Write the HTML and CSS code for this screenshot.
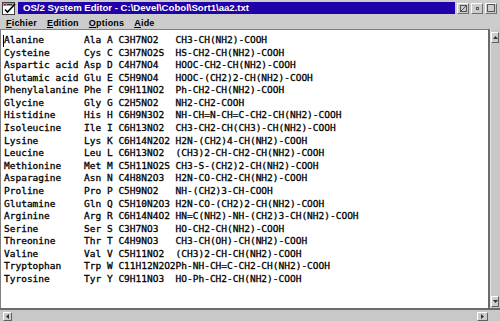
FILE: index.html
```html
<!DOCTYPE html>
<html>
<head>
<meta charset="utf-8">
<link rel="stylesheet" href="styles.css">
</head>
<body>
<div class="window">
  <div class="titlebar">
    <div class="sysicon">
      <svg width="16" height="15" viewBox="0 0 16 15">
        <rect x="1.5" y="1.5" width="12" height="12" fill="#fff" stroke="#404040"/>
        <rect x="2" y="2" width="11" height="3" fill="#9a9a9a"/>
        <rect x="3" y="3" width="2" height="1" fill="#a00"/>
        <rect x="6" y="3" width="5" height="1" fill="#333"/>
        <path d="M4 8.5 L6.5 11 L14 3" stroke="#000" stroke-width="1.6" fill="none"/>
      </svg>
    </div>
    <div class="title">OS/2 System Editor - C:\Devel\Cobol\Sort1\aa2.txt</div>
    <div class="tbtns">
      <span class="tbtn"><svg width="7" height="7" viewBox="0 0 7 7"><rect x="0.5" y="0.5" width="6" height="6" fill="none" stroke="#555"/><path d="M1 6 L6 1" stroke="#555"/></svg></span>
      <span class="tbtn"><span class="minbox"></span></span>
      <span class="tbtn"><span class="maxbox"></span></span>
    </div>
  </div>
  <div class="menubar">
    <span class="menu"><u>F</u>ichier</span>
    <span class="menu"><u>E</u>dition</span>
    <span class="menu"><u>O</u>ptions</span>
    <span class="menu"><u>A</u>ide</span>
  </div>
  <div class="client">
    <div class="editor">
      <span class="caret"></span>
      <div class="r"><span>Alanine</span><span>Ala</span><span>A</span><span>C3H7NO2</span><span>CH3-CH(NH2)-COOH</span></div>
      <div class="r"><span>Cysteine</span><span>Cys</span><span>C</span><span>C3H7NO2S</span><span>HS-CH2-CH(NH2)-COOH</span></div>
      <div class="r"><span>Aspartic acid</span><span>Asp</span><span>D</span><span>C4H7NO4</span><span>HOOC-CH2-CH(NH2)-COOH</span></div>
      <div class="r"><span>Glutamic acid</span><span>Glu</span><span>E</span><span>C5H9NO4</span><span>HOOC-(CH2)2-CH(NH2)-COOH</span></div>
      <div class="r"><span>Phenylalanine</span><span>Phe</span><span>F</span><span>C9H11NO2</span><span>Ph-CH2-CH(NH2)-COOH</span></div>
      <div class="r"><span>Glycine</span><span>Gly</span><span>G</span><span>C2H5NO2</span><span>NH2-CH2-COOH</span></div>
      <div class="r"><span>Histidine</span><span>His</span><span>H</span><span>C6H9N3O2</span><span>NH-CH=N-CH=C-CH2-CH(NH2)-COOH</span></div>
      <div class="r"><span>Isoleucine</span><span>Ile</span><span>I</span><span>C6H13NO2</span><span>CH3-CH2-CH(CH3)-CH(NH2)-COOH</span></div>
      <div class="r"><span>Lysine</span><span>Lys</span><span>K</span><span>C6H14N2O2</span><span>H2N-(CH2)4-CH(NH2)-COOH</span></div>
      <div class="r"><span>Leucine</span><span>Leu</span><span>L</span><span>C6H13NO2</span><span>(CH3)2-CH-CH2-CH(NH2)-COOH</span></div>
      <div class="r"><span>Methionine</span><span>Met</span><span>M</span><span>C5H11NO2S</span><span>CH3-S-(CH2)2-CH(NH2)-COOH</span></div>
      <div class="r"><span>Asparagine</span><span>Asn</span><span>N</span><span>C4H8N2O3</span><span>H2N-CO-CH2-CH(NH2)-COOH</span></div>
      <div class="r"><span>Proline</span><span>Pro</span><span>P</span><span>C5H9NO2</span><span>NH-(CH2)3-CH-COOH</span></div>
      <div class="r"><span>Glutamine</span><span>Gln</span><span>Q</span><span>C5H10N2O3</span><span>H2N-CO-(CH2)2-CH(NH2)-COOH</span></div>
      <div class="r"><span>Arginine</span><span>Arg</span><span>R</span><span>C6H14N4O2</span><span>HN=C(NH2)-NH-(CH2)3-CH(NH2)-COOH</span></div>
      <div class="r"><span>Serine</span><span>Ser</span><span>S</span><span>C3H7NO3</span><span>HO-CH2-CH(NH2)-COOH</span></div>
      <div class="r"><span>Threonine</span><span>Thr</span><span>T</span><span>C4H9NO3</span><span>CH3-CH(OH)-CH(NH2)-COOH</span></div>
      <div class="r"><span>Valine</span><span>Val</span><span>V</span><span>C5H11NO2</span><span>(CH3)2-CH-CH(NH2)-COOH</span></div>
      <div class="r"><span>Tryptophan</span><span>Trp</span><span>W</span><span>C11H12N2O2</span><span>Ph-NH-CH=C-CH2-CH(NH2)-COOH</span></div>
      <div class="r"><span>Tyrosine</span><span>Tyr</span><span>Y</span><span>C9H11NO3</span><span>HO-Ph-CH2-CH(NH2)-COOH</span></div>
    </div>
    <div class="vscroll">
      <span class="sbtn vbtn"><svg width="5" height="3" viewBox="0 0 5 3"><path d="M0 3 L2.5 0 L5 3 Z" fill="#333"/></svg></span>
      <span class="sbtn vbtn"><svg width="5" height="3" viewBox="0 0 5 3"><path d="M0 0 L2.5 3 L5 0 Z" fill="#333"/></svg></span>
    </div>
  </div>
  <div class="hscroll">
    <span class="sbtn hbtn-l"><svg width="3" height="5" viewBox="0 0 3 5"><path d="M3 0 L0 2.5 L3 5 Z" fill="#333"/></svg></span>
    <span class="sbtn hbtn-r"><svg width="3" height="5" viewBox="0 0 3 5"><path d="M0 0 L3 2.5 L0 5 Z" fill="#333"/></svg></span>
  </div>
</div>
</body>
</html>
```
FILE: styles.css
```css
* { box-sizing: border-box; }
html, body { margin: 0; padding: 0; }
body {
  width: 500px;
  height: 321px;
  overflow: hidden;
  background: #cccccc;
  font-family: "Liberation Sans", Arial, sans-serif;
}
.window {
  width: 500px;
  height: 321px;
  display: flex;
  flex-direction: column;
  background: #cccccc;
}
.titlebar {
  height: 16px;
  display: flex;
  align-items: center;
  padding-left: 1px;
}
.sysicon { width: 16px; height: 15px; }
.sysicon svg { display: block; }
.title {
  flex: 1;
  height: 12px;
  margin-left: 1px;
  margin-right: 2px;
  background: #2000a8;
  color: #ffffff;
  font-weight: bold;
  font-size: 9.6px;
  line-height: 12px;
  padding-left: 5px;
  white-space: nowrap;
  overflow: hidden;
}
.tbtns {
  display: flex;
  gap: 2px;
  padding-right: 3px;
}
.tbtn {
  width: 12px;
  height: 11px;
  border: 1px solid;
  border-color: #ffffff #707070 #707070 #ffffff;
  background: #cccccc;
  display: flex;
  align-items: center;
  justify-content: center;
}
.tbtn svg { display: block; }
.minbox { width: 3px; height: 3px; border: 1px solid #555; }
.maxbox { width: 8px; height: 8px; border: 1px solid #555; }
.menubar {
  height: 13px;
  display: flex;
  gap: 10px;
  padding: 1px 0 0 6px;
  font-size: 9px;
  font-weight: bold;
  letter-spacing: 0.2px;
  line-height: 12px;
  color: #000;
}
.menu u { text-decoration: underline; }
.client {
  flex: 1;
  display: flex;
  min-height: 0;
}
.editor {
  flex: 1;
  position: relative;
  background: #ffffff;
  border-top: 1px solid #808080;
  border-left: 1px solid #808080;
  padding: 4px 0 0 3px;
  overflow: hidden;
  font-family: "DejaVu Sans Mono", monospace;
  font-size: 9.5px;
  -webkit-text-stroke: 0.3px #000;
  color: #000;
}
.caret {
  position: absolute;
  left: 2px;
  top: 5px;
  width: 1px;
  height: 12px;
  background: #000;
}
.r {
  display: grid;
  grid-template-columns: 14ch 4ch 2ch 10ch auto;
  height: 12.58px;
  line-height: 12.58px;
  white-space: nowrap;
}
.vscroll {
  width: 12px;
  border-left: 2px solid #6a6a6a;
  background: #c8c8c8;
  box-shadow: inset 1px 0 #e4e4e4;
  display: flex;
  flex-direction: column;
  justify-content: space-between;
  padding: 3px 0 1px 1px;
}
.sbtn {
  display: flex;
  align-items: center;
  justify-content: center;
  background: #cccccc;
  border: 1px solid;
  border-color: #ffffff #606060 #606060 #ffffff;
}
.sbtn svg { display: block; }
.vbtn { width: 8px; height: 11px; }
.hscroll {
  height: 13px;
  border-top: 2px solid #6a6a6a;
  background: #c8c8c8;
  display: flex;
  justify-content: space-between;
  padding: 2px 12px 0 3px;
}
.hbtn-l { width: 9px; height: 9px; }
.hbtn-r { width: 11px; height: 9px; }
```
